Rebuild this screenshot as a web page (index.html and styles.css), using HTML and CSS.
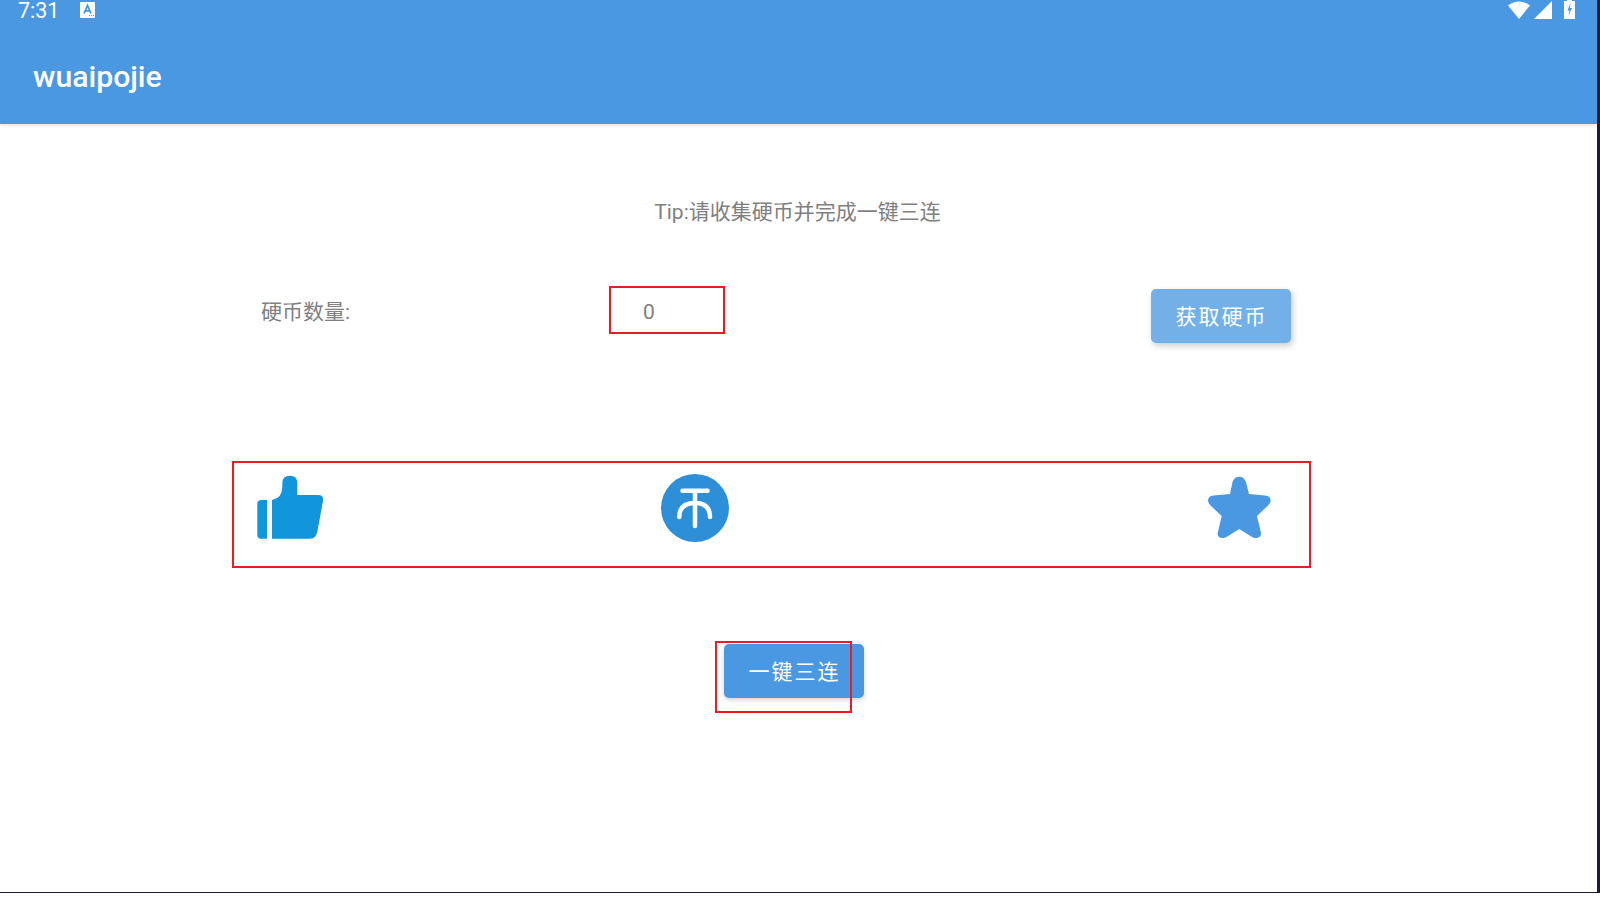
FILE: index.html
```html
<!DOCTYPE html>
<html lang="zh">
<head>
<meta charset="utf-8">
<title>wuaipojie</title>
<link rel="stylesheet" href="styles.css">
</head>
<body>
<div class="frame">
  <div class="screen">
    <header class="appbar">
      <div class="status">
        <span class="time">7:31</span>
        <svg class="ime" width="15" height="16" viewBox="0 0 15 16"><rect width="15" height="16" rx="1" fill="#fff"/><path d="M4 11.5 7.5 3.5 11 11.500M5.300 8.800H9.700" fill="none" stroke="#4a98e2" stroke-width="1.800"/><path d="M9 13.500h1M11 13.500h1M13 13.500h1" stroke="#4a98e2"/></svg>
        <span class="status-gap"></span>
        <svg class="wifi" width="22" height="18" viewBox="0 0 22 18"><path d="M0 4.500Q11 -3.500 22 4.500L11 18Z" fill="#fff"/></svg>
        <svg class="signal" width="18" height="18" viewBox="0 0 18 18"><path d="M18 0V18H0Z" fill="#fff"/></svg>
        <svg class="battery" width="11" height="19" viewBox="0 0 11 19"><path d="M3 1V0H8V1H11V19H0V1Z" fill="#fff"/><path d="M6.500 3 3.500 10.500H5.500L4.500 16 8 8H6Z" fill="#4a98e2"/></svg>
      </div>
      <h1 class="title">wuaipojie</h1>
    </header>
    <main class="content">
      <p class="tip">Tip:请收集硬币并完成一键三连</p>
      <div class="coin-row">
        <span class="label">硬币数量:</span>
        <span class="value">0</span>
        <button class="btn btn-light">获取硬币</button>
      </div>
      <div class="icon-row">
        <svg class="thumb" width="67" height="64" viewBox="0 0 67 64"><path fill="#1296db" d="M4.300 25H10V63.700H4.300Q.3 63.700.3 59.700V29Q.3 25 4.300 25ZM15 25Q25.300 23 25.300 11.700V8Q25.300.7 33 .7 40.300.7 40.300 8V20H61Q67 20 66 26L60.500 56Q59 63.700 53 63.700H15Z"/></svg>
        <svg width="68" height="68" viewBox="0 0 68 68"><circle cx="34" cy="34" r="34" fill="#2d8fd8"/><path d="M21.500 16.700H46.500M34 16.700V52M18.300 43Q18.300 29 34 29 49 29 49 43" fill="none" stroke="#fff" stroke-width="4.500" stroke-linecap="round"/></svg>
        <svg class="star" width="65" height="63" viewBox="0 0 65 63"><path fill="#4a98e2" d="M32.300.7Q37 .7 39 6L42 18 58 19.500Q63.700 20 63.700 24.500 63.700 27 61 29.500L50 40 54 57Q54.500 62 48.500 62 46.500 62 45 61L32.300 53 19.500 61Q18 62 16 62 10 62 10.700 57L14.700 40 3.500 29.500Q1 27 1 24.500 1 20 6.500 19.500L23 18 25.500 6Q27.500.7 32.300.7Z"/></svg>
      </div>
      <button class="btn btn-main">一键三连</button>
    </main>
    <div class="mark mark-value"></div>
    <div class="mark mark-icons"></div>
    <div class="mark mark-action"></div>
  </div>
</div>
</body>
</html>
```

FILE: styles.css
```css
* { box-sizing: border-box; }
html, body { margin: 0; background: #fff; }
body { font-family: Roboto, "Noto Sans CJK SC", sans-serif; overflow: hidden; }
.frame { width: 1600px; height: 893px; background: #1c1c3a; }
.screen { position: relative; width: 1597px; height: 892px; background: #fff; overflow: hidden; }

.appbar { height: 124px; background: #4a98e2; color: #fff; box-shadow: 0 1px 4px rgba(0,0,0,.14); }
.status { display: flex; align-items: flex-start; height: 24px; padding-left: 18px; }
.time { width: 62px; font-size: 21.500px; line-height: 22px; }
.ime { margin-top: 2px; }
.status-gap { flex: 1; }
.wifi { margin-top: 1px; }
.signal { margin: 1px 0 0 4px; }
.battery { margin: 0 22px 0 12px; }
.title { margin: 33px 0 0 33px; font-size: 30.200px; line-height: 40px; font-weight: 500; }

.content { display: flex; flex-direction: column; align-items: flex-start; }
.tip { width: 100%; margin: 75px 0 0; text-align: center; padding-right: 2px; font-size: 21px; line-height: 26px; color: #808080; }
.coin-row { display: grid; grid-template-columns: 382px 508px 140px; margin: 64px 0 0 261px; font-size: 21px; line-height: 26px; color: #808080; }
.label, .value { margin-top: 10px; }
.btn { width: 140px; height: 54px; padding: 0 0 2px 1px; border: 0; border-radius: 5px; color: #fff; font-family: inherit; font-size: 21px; letter-spacing: 2px; }
.btn-light { background: #73b0e8; box-shadow: 2px 3px 6px rgba(0,0,0,.2); }
.btn-main { margin: 102px 0 0 724px; background: #4a98e2; box-shadow: 0 2px 5px rgba(0,0,0,.18); }

.icon-row { display: grid; grid-template-columns: 404px 546px auto; margin: 131px 0 0 257px; }
.icon-row svg { display: block; }
.icon-row .thumb { margin-top: 1px; }
.icon-row .star { margin-top: 2px; }

.mark { position: absolute; border: 2px solid #ed1c24; }
.mark-value { left: 609px; top: 286px; width: 116px; height: 48px; }
.mark-icons { left: 232px; top: 461px; width: 1079px; height: 107px; }
.mark-action { left: 715px; top: 641px; width: 137px; height: 72px; }
```
